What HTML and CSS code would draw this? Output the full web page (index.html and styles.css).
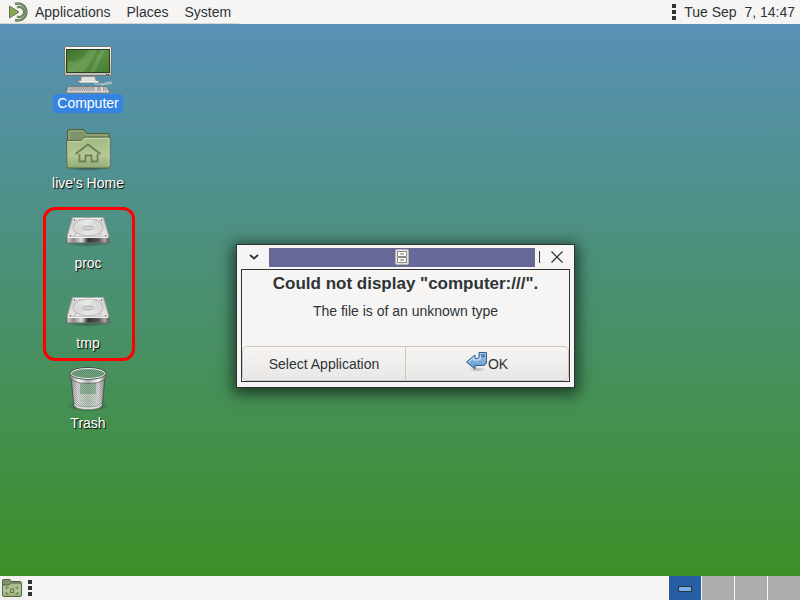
FILE: index.html
```html
<!DOCTYPE html>
<html lang="en">
<head>
<meta charset="utf-8">
<meta name="viewport" content="width=device-width, initial-scale=1">
<title>MATE Desktop</title>
<link rel="stylesheet" href="styles.css">
</head>
<body>
<svg class="defs" aria-hidden="true">
  <defs>
    <linearGradient id="steel" x1="0" y1="0" x2="0" y2="1"><stop offset="0" stop-color="#fafafa"/><stop offset="1" stop-color="#bcbcb8"/></linearGradient>
    <linearGradient id="plate" x1="0" y1="0" x2="0" y2="1"><stop offset="0" stop-color="#cfcfcd"/><stop offset="1" stop-color="#e6e6e4"/></linearGradient>
    <linearGradient id="screen" x1="0" y1="0" x2="1" y2="1"><stop offset="0" stop-color="#3c702c"/><stop offset=".5" stop-color="#5a9142"/><stop offset="1" stop-color="#467e32"/></linearGradient>
    <linearGradient id="folder" x1="0" y1="0" x2="0" y2="1"><stop offset="0" stop-color="#a3b984"/><stop offset=".6" stop-color="#b4c795"/><stop offset="1" stop-color="#92ac75"/></linearGradient>
    <linearGradient id="edge" x1="0" y1="0" x2="1" y2="0"><stop offset="0" stop-color="#d8d8d8"/><stop offset=".15" stop-color="#8c8c8c"/><stop offset=".35" stop-color="#dedede"/><stop offset=".5" stop-color="#333"/><stop offset=".75" stop-color="#555"/><stop offset=".9" stop-color="#aaa"/><stop offset="1" stop-color="#555"/></linearGradient>
    <linearGradient id="can" x1="0" y1="0" x2="1" y2="0"><stop offset="0" stop-color="#9b9f9b"/><stop offset=".2" stop-color="#e2e2e0"/><stop offset=".5" stop-color="#b9cbbb"/><stop offset=".8" stop-color="#e0e2e0"/><stop offset="1" stop-color="#8f948f"/></linearGradient>
    <linearGradient id="rim" x1="0" y1="0" x2="1" y2="0"><stop offset="0" stop-color="#777"/><stop offset=".25" stop-color="#fff"/><stop offset=".5" stop-color="#aaa"/><stop offset=".8" stop-color="#fff"/><stop offset="1" stop-color="#666"/></linearGradient>
    <linearGradient id="arrow" x1="0" y1="0" x2="0" y2="1"><stop offset="0" stop-color="#a9c8ea"/><stop offset="1" stop-color="#5f95cc"/></linearGradient>
    <radialGradient id="shade"><stop offset="0" stop-color="#000" stop-opacity=".5"/><stop offset="1" stop-color="#000" stop-opacity="0"/></radialGradient>
    <pattern id="mesh" width="2" height="2" patternUnits="userSpaceOnUse"><path d="M0 0h1v1H0zM1 1h1v1H1z" fill="#555b55" fill-opacity=".35"/></pattern>
    <symbol id="drive" viewBox="0 0 48 48">
      <ellipse cx="24" cy="36" rx="24" ry="5" fill="url(#shade)"/>
      <path d="M8.500 11.500h31l5.500 19.500v5q0 1-1 1H4q-1 0-1-1v-5z" fill="url(#edge)" stroke="#6c706c"/>
      <path d="M8.500 11.500h31l5.500 19.500H3z" fill="url(#plate)" stroke="#a5a8a3"/>
      <path d="M9.500 12.500h29M4 31.500h40" stroke="#f4f4f4"/>
      <ellipse cx="24" cy="21.500" rx="15" ry="8.500" fill="#dadad8" stroke="#b0b2ae" stroke-width=".8"/>
      <path d="M13 17q9-6 17-3l-6 7zM35 26q-9 5-17 2l6-6z" fill="#fff" fill-opacity=".3"/>
      <ellipse cx="24" cy="22" rx="5" ry="2" fill="#d4d4d2" stroke="#a6a8a4" stroke-width=".8"/>
      <path d="M10 30l3-4M34 30l4-3" fill="none" stroke="#b4b6b2"/>
      <path d="M10 14h1M37 14h1M6 29.500h1M41 29.500h1" stroke="#686b68" stroke-width="1.500"/>
    </symbol>
  </defs>
</svg>

<header class="panel panel-top">
  <nav class="menubar">
    <svg class="logo" viewBox="0 0 20 20" aria-hidden="true">
      <path d="M6 2a8.500 8.500 0 1 1 0 16" fill="none" stroke="#657850" stroke-width="2.400"/>
      <path d="M8 5.500a5 5 0 1 1 0 9" fill="none" stroke="#657850" stroke-width="2.200"/>
      <path d="M6 2a8.500 8.500 0 1 1 0 16M8 5.500a5 5 0 1 1 0 9" fill="none" stroke="#92a77c" stroke-width=".6"/>
      <path d="M.5 4L10 10 .5 16z" fill="#87a752" stroke="#667b4a"/>
    </svg>
    <button type="button">Applications</button>
    <button type="button">Places</button>
    <button type="button">System</button>
  </nav>
  <div class="tray">
    <span class="grip" aria-hidden="true"><i></i><i></i><i></i></span>
    <button type="button" class="clock">Tue Sep&nbsp; 7, 14:47</button>
  </div>
</header>

<main class="desktop">
  <div class="icons">
    <a class="item selected" href="#computer">
      <svg viewBox="0 0 48 48" aria-hidden="true">
        <ellipse cx="24" cy="44" rx="24" ry="4" fill="url(#shade)"/>
        <rect x=".5" y=".5" width="47" height="29" rx="1.500" fill="url(#steel)" stroke="#72756f"/>
        <rect x="2.500" y="3.500" width="43" height="23" fill="url(#screen)" stroke="#263f20"/>
        <path d="M24 4h9L20 26H4V15q14 3 20-11zM37 4h4L31 26h-5z" fill="#b5d39a" fill-opacity=".2"/>
        <path d="M42 28.500h3" stroke="#555"/>
        <path d="M17 30.500h14l1 4h3v2H14v-2h3z" fill="#dedfdc" stroke="#777b75" stroke-width=".7"/>
        <path d="M16 36h18" stroke="#fff"/>
        <path d="M30 38h10q3-2 7-2 2 2-3 2-10 0-5 3" fill="none" stroke="#c7cbc7"/>
        <path d="M4.500 40.500h38l3 5.500v1h-43v-1z" fill="#d8d8d6" stroke="#7a7d78"/>
        <path d="M6 42h25M5 44h26M33 42h4M33 44h4M39 42h3M39 44h4" stroke="#666a64" stroke-width="1.200" stroke-dasharray="1.500 .6"/>
      </svg>
      <span>Computer</span>
    </a>
    <a class="item" href="#home">
      <svg viewBox="0 0 48 48" aria-hidden="true">
        <ellipse cx="24" cy="42" rx="24" ry="3" fill="url(#shade)"/>
        <path d="M3.500 18V5q0-1.500 1.500-1.500h14q1 0 1.500 1l2 3H44q1.500 0 1.500 1.500v12z" fill="#7e9468" stroke="#4e6040"/>
        <path d="M5 16V5h14l3 4h22" fill="none" stroke="#9bad83"/>
        <path d="M2.500 16q0-1.500 1.500-1.500h12q1 0 2-1l2-2q.8-.5 2-.5H44.500q1.500 0 1.500 1.500V40q0 2-2 2H5q-2 0-2-2z" fill="url(#folder)" stroke="#586b48"/>
        <path d="M3.500 17q0-1.500 1.500-1.500h11.500q1 0 2-1l2-2h24.500V40" fill="none" stroke="#c6d5ac"/>
        <path d="M11.500 28L24 18.500 36.500 28M15.500 28v7.500h6V29.500h6v6h6V28" fill="none" stroke="#6c7f59" stroke-width="1.800"/>
      </svg>
      <span>live's Home</span>
    </a>
    <div class="marked">
      <a class="item" href="#proc"><svg aria-hidden="true"><use href="#drive"/></svg><span>proc</span></a>
      <a class="item" href="#tmp"><svg aria-hidden="true"><use href="#drive"/></svg><span>tmp</span></a>
    </div>
    <a class="item" href="#trash">
      <svg viewBox="0 0 48 48" aria-hidden="true">
        <ellipse cx="24" cy="40" rx="22" ry="6" fill="url(#shade)"/>
        <path d="M7 10l2.500 28q1 5 14.500 5t14.500-5L41 10z" fill="url(#can)" stroke="#4d524d"/>
        <path d="M7 10l2.500 28q1 5 14.500 5t14.500-5L41 10z" fill="url(#mesh)"/>
        <path d="M16 17h16v11H16z" fill="#357a47" fill-opacity=".35"/>
        <path d="M10 37q3 4 14 4t14-4v2q-2 4.500-14 4.500T10 39z" fill="#e5e7e4" stroke="#777b76" stroke-width=".6"/>
        <ellipse cx="24" cy="7.500" rx="18" ry="6" fill="#6fa583" stroke="#444944"/>
        <ellipse cx="24" cy="7.500" rx="17" ry="5" fill="url(#mesh)" stroke="#eee"/>
        <path d="M6 8v4q5 5.500 18 5.500T42 12V8q-4 5.500-18 5.500T6 8z" fill="url(#rim)" stroke="#555a55" stroke-width=".7"/>
      </svg>
      <span>Trash</span>
    </a>
  </div>

  <section class="dialog" role="alertdialog" aria-labelledby="dialog-title" aria-describedby="dialog-text">
    <div class="titlebar">
      <button type="button" class="wm menu" aria-label="Window menu"><svg viewBox="0 0 16 16"><path d="M4 6l4 3.500L12 6" fill="none" stroke="#2e3436" stroke-width="1.800"/></svg></button>
      <div class="strip">
        <svg viewBox="0 0 16 16" aria-hidden="true"><rect x="1.500" y=".5" width="13" height="15" rx="1.500" fill="#e5e5df" stroke="#b5b6b0"/><path d="M3.500 2.500h9v5h-9zM3.500 8.500h9v5h-9z" fill="#fafaf7" stroke="#8b8d83"/><path d="M6 5h4M6 11h4" stroke="#777a72"/></svg>
      </div>
      <span class="bar" aria-hidden="true"></span>
      <button type="button" class="wm close" aria-label="Close"><svg viewBox="0 0 16 16"><path d="M2.500 2.500l11 11M13.500 2.500l-11 11" fill="none" stroke="#2e3436" stroke-width="1.200"/></svg></button>
    </div>
    <div class="content">
      <h1 id="dialog-title">Could not display "computer:///".</h1>
      <p id="dialog-text">The file is of an unknown type</p>
      <div class="actions">
        <button type="button">Select Application</button>
        <button type="button">
          <svg viewBox="0 0 22 22" aria-hidden="true"><ellipse cx="11" cy="18.500" rx="9" ry="2.500" fill="url(#shade)" opacity=".5"/><path d="M.5 11L9 4v3.500h2.500q1.500 0 1.500-2v-4h7.500V10q0 4.500-4 4.500H9V18z" fill="url(#arrow)" stroke="#2d5d96"/><path d="M2.500 11L8 6.500v2.500h4q2.500 0 2.500-3V3" fill="none" stroke="#d9e8f6"/><path d="M14.500 3h4.500v3.500h-4z" fill="#4e83bd"/></svg>OK
        </button>
      </div>
    </div>
  </section>
</main>

<footer class="panel panel-bottom">
  <div class="tasks">
    <button type="button" class="show" aria-label="Show desktop">
      <svg viewBox="0 0 22 22"><path d="M1.500 9V3.500q0-1 1-1H9l1.500 2H19q1 0 1 1V9z" fill="#7e9468" stroke="#4e6040"/><path d="M1.500 9q0-1 1-1H8l2-2h10.500V18q0 1.500-1.500 1.500H3q-1.500 0-1.500-1.500z" fill="url(#folder)" stroke="#586b48"/><path d="M5.500 12.500v-2h2M14.500 10.500h2v2M16.500 15v2h-2M7.500 17h-2v-2" fill="none" stroke="#5d704b"/><rect x="9.500" y="12" width="3" height="3.500" fill="none" stroke="#5d704b"/></svg>
    </button>
    <span class="grip" aria-hidden="true"><i></i><i></i><i></i></span>
  </div>
  <div class="workspaces">
    <button type="button" class="current" aria-label="Workspace 1"><i></i></button>
    <button type="button" aria-label="Workspace 2"></button>
    <button type="button" aria-label="Workspace 3"></button>
    <button type="button" aria-label="Workspace 4"></button>
  </div>
</footer>
</body>
</html>
```

FILE: styles.css
```css
* { box-sizing: border-box; }

body {
  margin: 0;
  min-height: 100vh;
  display: flex;
  flex-direction: column;
  font: 14px/20px "Liberation Sans", Arial, sans-serif;
  color: #2e3436;
  overflow: hidden;
}

button {
  margin: 0;
  padding: 0;
  border: 0;
  background: none;
  font: inherit;
  color: inherit;
}

svg { display: block; flex: none; }

.defs { position: absolute; width: 0; height: 0; }

.panel {
  height: 24px;
  display: flex;
  justify-content: space-between;
  background: #f6f5f4;
}

.menubar {
  display: flex;
  align-items: center;
  gap: 16px;
  padding: 0 8px 0 9px;
  border-bottom: 1px solid #d9d6d2;
}

.logo { width: 20px; height: 20px; margin-right: -10px; }

.tray { display: flex; align-items: center; gap: 8px; padding-right: 5px; }

.grip {
  display: flex;
  flex-direction: column;
  justify-content: center;
  gap: 2px;
}

.grip i { width: 4px; height: 4px; background: #2e3436; }

.desktop {
  flex: 1;
  position: relative;
  background: linear-gradient(#5891b7, #3c8f27);
}

.icons { width: 176px; padding-top: 9px; }

.item {
  height: 80px;
  display: flex;
  flex-direction: column;
  align-items: center;
  justify-content: flex-end;
  color: #fff;
  text-decoration: none;
  text-shadow: 1px 1px 1px #000;
}

.item svg { width: 48px; height: 48px; }

.item span { padding: 0 4px; line-height: 19px; border-radius: 4px; }

.selected span { background: #3584e4; text-shadow: none; }

.marked { position: relative; }

.marked::after {
  content: "";
  position: absolute;
  inset: 14px 41px -8px 43px;
  border: 3px solid #f00;
  border-radius: 12px;
  pointer-events: none;
}

.dialog {
  position: absolute;
  left: 236px;
  top: 220px;
  width: 339px;
  padding: 0 4px 5px;
  background: #f6f5f4;
  border: 1px solid #2e3436;
  box-shadow: 0 3px 14px 3px rgba(0, 0, 0, 0.6);
}

.titlebar { display: flex; align-items: center; height: 24px; }

.wm { display: grid; place-items: center; height: 24px; }
.wm svg { width: 16px; height: 16px; }
.menu { width: 28px; padding-right: 2px; }
.close { width: 30px; padding-left: 4px; }

.strip {
  flex: 1;
  height: 19px;
  display: grid;
  place-items: center;
  background: #686898;
}

.strip svg { width: 16px; height: 16px; }

.bar { width: 1px; height: 12px; margin-left: 4px; background: #2e3436; }

.content { border: 1px solid #2e3436; text-align: center; }

h1 { margin: 0; padding-top: 4px; font-size: 17px; line-height: 20px; }

p { margin: 7px 0 25px; }

.actions { display: flex; }

.actions button {
  flex: 1;
  height: 35px;
  display: flex;
  align-items: center;
  justify-content: center;
  border: 1px solid #cdc7c2;
  border-radius: 5px 0 0 5px;
  background: linear-gradient(#f6f5f4, #e9e7e5);
}

.actions button + button { border-left: 0; border-radius: 0 5px 5px 0; }

.actions svg { width: 22px; height: 22px; margin-bottom: 4px; }

.tasks { display: flex; gap: 4px; }

.show { display: grid; place-items: center; width: 24px; background: #f1efed; }
.show svg { width: 22px; height: 22px; }

.workspaces { display: flex; gap: 1px; }

.workspaces button {
  width: 32px;
  display: grid;
  place-items: center;
  background: #aeadab;
}

.workspaces .current { background: #265ea3; }

.current i {
  width: 14px;
  height: 6px;
  margin-top: 2px;
  background: #78aeed;
  border: 1px solid #2e3436;
}
```
